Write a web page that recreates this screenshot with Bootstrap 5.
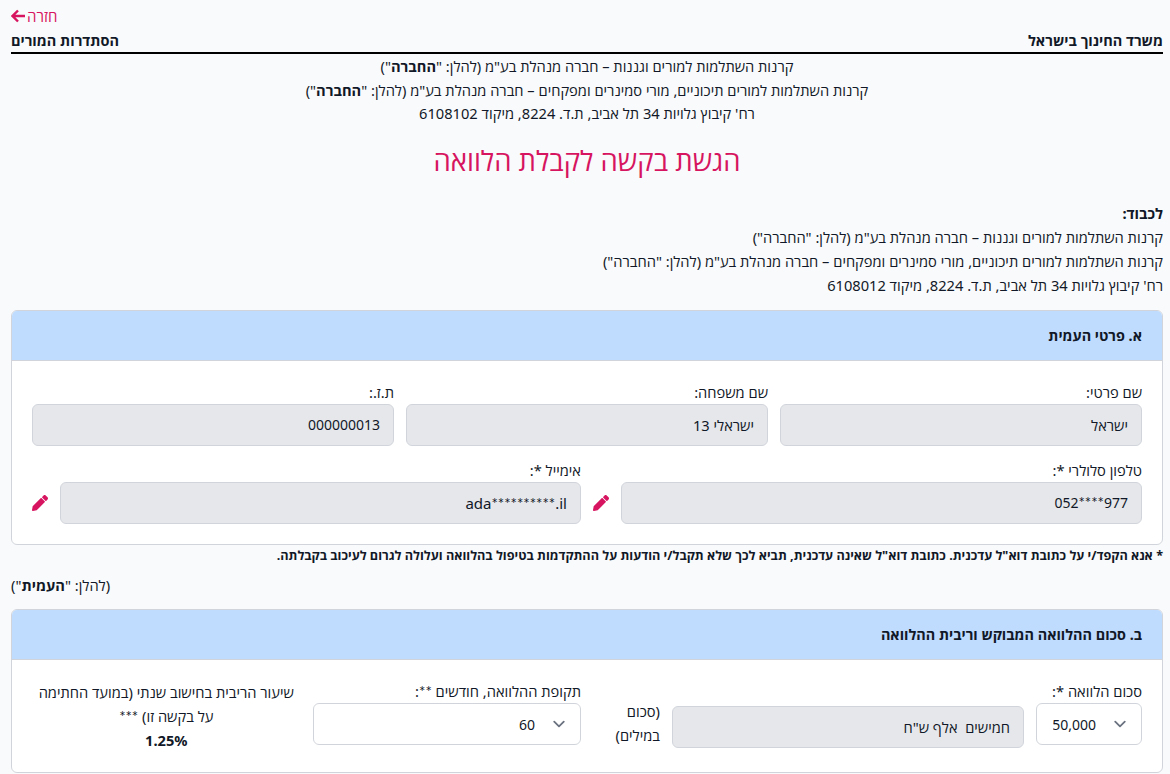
<!DOCTYPE html>
<html lang="he" dir="rtl">
<head>
<meta charset="utf-8">
<title>הגשת בקשה לקבלת הלוואה</title>
<link href="https://cdn.jsdelivr.net/npm/bootstrap@5.3.0/dist/css/bootstrap.min.css" rel="stylesheet">
<style>
html,body{overflow:hidden;height:774px}
body{background:#f9fafb;color:#111827;font-family:"Noto Sans","Open Sans",sans-serif;font-size:14.67px;line-height:24px}
.page-wrap{padding:4px 7px 0 11px}
.back-link{color:#d6145f;text-decoration:none;font-size:15px;line-height:24px;gap:1px}
.back-row{height:24px}
.org-head{font-weight:700;font-size:14.5px;line-height:24px;border-bottom:2px solid #000;height:26px}
.intro{line-height:23.7px;padding-top:1px}
.page-title{color:#d6145f;font-size:27.5px;line-height:36px;font-weight:400;margin:17px 0 22px}
.addr{line-height:24px;margin-bottom:13px}
.sec-card{border:1px solid #d1d5db;border-radius:6px;background:#fff;overflow:hidden}
.sec-head{background:#bfdbfe;height:50px;border-bottom:1px solid #d1d5db;padding:0 20px;font-weight:700;font-size:14.4px;display:flex;align-items:center}
.sec-body{padding:20px}
.tight{--bs-gutter-x:12px;--bs-gutter-y:0}
.gap-tw{gap:12px}
.fld-label{display:block;line-height:23px;height:23px;margin:0}
.fld-ro{background:#e5e7eb;border:1px solid #d1d5db;border-radius:6px;height:42px;padding:0 13px;color:#111827;display:flex;align-items:center}
.lat{font-family:"Noto Sans",sans-serif;font-size:14px}
.mail{font-size:15px}
.stars{font-family:"Lato",sans-serif;font-size:15px;line-height:1}
.row-two{margin-top:13px}
.fld-sel{height:42px;border:1px solid #d1d5db;border-radius:6px;font-size:14px;color:#111827;padding:0 45px 0 16px;background-color:#fff;background-image:url("data:image/svg+xml,%3csvg xmlns='http://www.w3.org/2000/svg' viewBox='0 0 20 20'%3e%3cpath fill='none' stroke='%236b7280' stroke-linecap='round' stroke-linejoin='round' stroke-width='1.5' d='m6 8 4 4 4-4'/%3e%3c/svg%3e");background-size:24px 24px;background-position:right 9px center}
.sel-amount{width:106px}
.pen{flex:0 0 16px;color:#d6145f;display:block}
.note-bold{font-weight:700;font-size:12.67px;line-height:20px;margin-top:0}
.hereafter{line-height:24px;margin:8px 0 12px;text-align:left}
.ro-amount{flex:1 1 auto;margin-top:26px}
.words{flex:0 0 67px;margin-top:20px;line-height:23.5px}
</style>
</head>
<body>
<div class="page-wrap">
  <div class="back-row d-flex justify-content-end">
    <a class="back-link d-inline-flex align-items-center" href="#">חזרה
      <svg width="15" height="14" viewBox="0 0 15 14" aria-hidden="true"><path d="M14 7H2M7 1.5 1.5 7 7 12.5" fill="none" stroke="currentColor" stroke-width="2.4"/></svg>
    </a>
  </div>
  <div class="org-head d-flex justify-content-between">
    <span>משרד החינוך בישראל</span>
    <span>הסתדרות המורים</span>
  </div>
  <div class="intro text-center">
    <div>קרנות השתלמות למורים וגננות – חברה מנהלת בע"מ (להלן: "<b>החברה</b>")</div>
    <div>קרנות השתלמות למורים תיכוניים, מורי סמינרים ומפקחים – חברה מנהלת בע"מ (להלן: "<b>החברה</b>")</div>
    <div>רח' קיבוץ גלויות 34 תל אביב, ת.ד. 8224, מיקוד 6108102</div>
  </div>
  <h1 class="page-title text-center">הגשת בקשה לקבלת הלוואה</h1>
  <div class="addr">
    <div><b>לכבוד:</b></div>
    <div>קרנות השתלמות למורים וגננות – חברה מנהלת בע"מ (להלן: "החברה")</div>
    <div>קרנות השתלמות למורים תיכוניים, מורי סמינרים ומפקחים – חברה מנהלת בע"מ (להלן: "החברה")</div>
    <div>רח' קיבוץ גלויות 34 תל אביב, ת.ד. 8224, מיקוד 6108012</div>
  </div>

  <div class="sec-card">
    <div class="sec-head">א. פרטי העמית</div>
    <div class="sec-body">
      <div class="row tight">
        <div class="col-4"><label class="fld-label">שם פרטי:</label><div class="fld-ro">ישראל</div></div>
        <div class="col-4"><label class="fld-label">שם משפחה:</label><div class="fld-ro">ישראלי 13</div></div>
        <div class="col-4"><label class="fld-label">ת.ז.:</label><div class="fld-ro lat">000000013</div></div>
        <div class="col-6 row-two">
          <label class="fld-label">טלפון סלולרי *:</label>
          <div class="d-flex align-items-center gap-tw">
            <div class="fld-ro lat flex-grow-1"><bdi dir="ltr">052<span class="stars">****</span>977</bdi></div>
            <svg class="pen" width="16" height="16" viewBox="0 0 512 512" aria-hidden="true"><path fill="currentColor" d="M497.9 142.1l-46.1 46.1c-4.7 4.7-12.3 4.7-17 0l-111-111c-4.7-4.7-4.7-12.3 0-17l46.1-46.1c18.7-18.7 49.1-18.7 67.9 0l60.1 60.1c18.8 18.7 18.8 49.1 0 67.9zM284.2 99.8L21.6 362.4.4 483.9c-2.9 16.4 11.4 30.6 27.8 27.8l121.5-21.3 262.6-262.6c4.7-4.7 4.7-12.3 0-17l-111-111c-4.8-4.7-12.4-4.7-17.1 0z"/></svg>
          </div>
        </div>
        <div class="col-6 row-two">
          <label class="fld-label">אימייל *:</label>
          <div class="d-flex align-items-center gap-tw">
            <div class="fld-ro lat mail flex-grow-1"><bdi dir="ltr">ada<span class="stars">**********</span>.il</bdi></div>
            <svg class="pen" width="16" height="16" viewBox="0 0 512 512" aria-hidden="true"><path fill="currentColor" d="M497.9 142.1l-46.1 46.1c-4.7 4.7-12.3 4.7-17 0l-111-111c-4.7-4.7-4.7-12.3 0-17l46.1-46.1c18.7-18.7 49.1-18.7 67.9 0l60.1 60.1c18.8 18.7 18.8 49.1 0 67.9zM284.2 99.8L21.6 362.4.4 483.9c-2.9 16.4 11.4 30.6 27.8 27.8l121.5-21.3 262.6-262.6c4.7-4.7 4.7-12.3 0-17l-111-111c-4.8-4.7-12.4-4.7-17.1 0z"/></svg>
          </div>
        </div>
      </div>
    </div>
  </div>
  <div class="note-bold">* אנא הקפד/י על כתובת דוא"ל עדכנית. כתובת דוא"ל שאינה עדכנית, תביא לכך שלא תקבל/י הודעות על ההתקדמות בטיפול בהלוואה ועלולה לגרום לעיכוב בקבלתה.</div>
  <div class="hereafter">(להלן: "<b>העמית</b>")</div>

  <div class="sec-card">
    <div class="sec-head">ב. סכום ההלוואה המבוקש וריבית ההלוואה</div>
    <div class="sec-body">
      <div class="row tight">
        <div class="col-6 d-flex gap-tw">
          <div class="flex-shrink-0"><label class="fld-label">סכום הלוואה *:</label><select class="form-select fld-sel lat sel-amount"><option>50,000</option></select></div>
          <div class="fld-ro ro-amount">חמישים&nbsp; אלף ש"ח</div>
          <div class="words">(סכום במילים)</div>
        </div>
        <div class="col-3"><label class="fld-label">תקופת ההלוואה, חודשים <span class="stars">**</span>:</label><select class="form-select fld-sel lat"><option>60</option></select></div>
        <div class="col-3 text-center">שיעור הריבית בחישוב שנתי (במועד החתימה על בקשה זו) <span class="stars">***</span><br><b>1.25%</b></div>
      </div>
    </div>
  </div>
</div>
</body>
</html>
